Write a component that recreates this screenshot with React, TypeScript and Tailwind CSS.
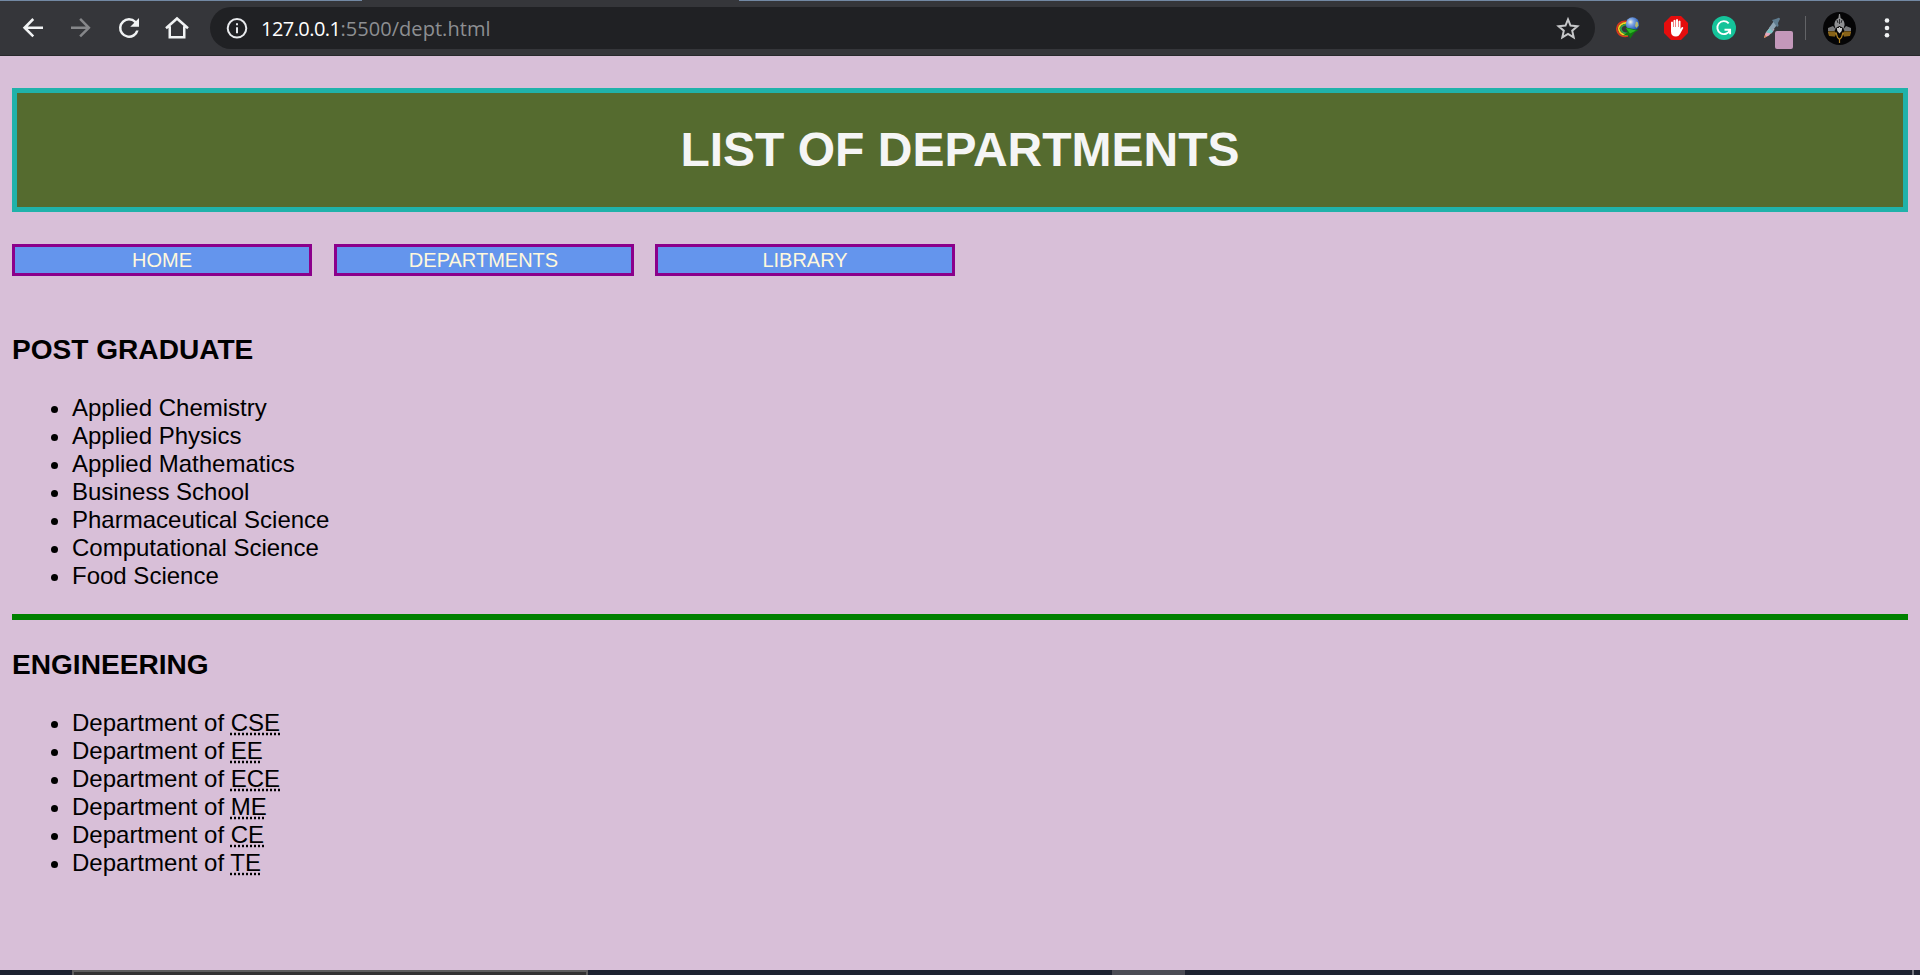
import React from "react";

const postGraduate = [
  "Applied Chemistry",
  "Applied Physics",
  "Applied Mathematics",
  "Business School",
  "Pharmaceutical Science",
  "Computational Science",
  "Food Science",
];
const engineering = ["CSE", "EE", "ECE", "ME", "CE", "TE"];
const nav = ["HOME", "DEPARTMENTS", "LIBRARY"];

function Toolbar() {
  return (
    <header className="flex h-14 flex-col border-b border-[#28292c] bg-[#35363a]">
      <div className="flex h-px justify-between">
        <div className="w-[362px] bg-[#7288a3]" />
        <div className="w-[1181px] bg-[#7288a3]" />
      </div>
      <div className="flex h-[54px] items-center">
        <svg className="ml-[18px] h-[30px] w-[30px]" viewBox="0 0 24 24" fill="#f1f3f4">
          <path d="M20 10.700H7.830l5.090-5.090L11.500 4l-7.700 7.700 7.700 7.700 1.410-1.410L7.830 12.700H20v-2z" />
        </svg>
        <svg className="ml-[18px] h-[30px] w-[30px]" viewBox="0 0 24 24" fill="#86878a">
          <path d="M12 4l-1.410 1.410L15.870 10.700H4v2h11.870l-5.280 5.290L12 19.400l7.700-7.700z" />
        </svg>
        <svg className="ml-[18px] h-[30px] w-[30px]" viewBox="0 0 24 24" fill="#f1f3f4">
          <path d="M17.650 6.350A7.960 7.960 0 0 0 12 4a8 8 0 1 0 7.730 10h-2.080A6 6 0 1 1 12 6c1.660 0 3.140.69 4.220 1.780L13 11h7V4l-2.350 2.350z" />
        </svg>
        <svg className="ml-[18px] h-[30px] w-[30px]" viewBox="0 0 24 24" fill="none" stroke="#f1f3f4" strokeWidth="2">
          <path d="M3.200 12.200 12 4.400l8.800 7.800M6.200 10.500V19.400h11.600V10.500" />
        </svg>
        <div className="ml-[18px] flex h-[42px] w-[1385px] items-center rounded-full bg-[#202124]">
          <svg className="ml-[15px] h-6 w-6" viewBox="0 0 24 24" fill="none" stroke="#e8eaed" strokeWidth="2">
            <circle cx="12" cy="12.300" r="9.300" />
            <path d="M12 11.300v6M12 7.300v2" />
          </svg>
          <div className="ml-[12px] flex-1 whitespace-nowrap pt-[2px] font-['Open_Sans',sans-serif] text-[20px] leading-[42px] text-[#8d8f92]">
            <span className="tracking-[-0.55px] text-white">127.0.0.1</span>
            <span className="tracking-[0.05px]">:5500/dept.html</span>
          </div>
          <svg className="mr-[15px] h-6 w-6" viewBox="0 0 24 24" fill="none" stroke="#c6c7c9" strokeWidth="2">
            <path d="M12 3.400l2.500 6.200 6.900.6-5.200 4.500 1.500 6.700L12 17.900l-5.700 3.500 1.500-6.700-5.200-4.500 6.900-.6z" />
          </svg>
        </div>
        <svg className="ml-[21px] h-6 w-6" viewBox="0 0 24 24">
          <defs>
            <radialGradient id="globe" cx=".35" cy=".35" r=".65">
              <stop offset="0" stopColor="#f6f6dc" />
              <stop offset=".35" stopColor="#7fa6e4" />
              <stop offset="1" stopColor="#1f55b4" />
            </radialGradient>
          </defs>
          <path d="M11 5.500C5 4.500 0 9 1 14s6 7.500 11 6" fill="none" stroke="#d9381c" strokeWidth="1.700" />
          <path d="M11 7C6 6.500 2 10 3 14s5 5.500 9 4.500" fill="none" stroke="#f4d321" strokeWidth="1.700" />
          <path d="M11 8.700C7 8.500 4 11 5 13.700s4 4 7 3.300" fill="none" stroke="#2fa648" strokeWidth="1.700" />
          <circle cx="16.500" cy="8" r="6.700" fill="url(#globe)" />
          <path d="M20 5.500l2 1 .5 3-2 2.500-1.500-2z" fill="#d8d052" opacity=".75" />
          <path d="M9.500 11.500l13 2.500-4.200 2.800-4.300 6-1-3.600-6 .3 4.500-3.300z" fill="#107a10" />
          <path d="M10 12l10 2.500-6 3z" fill="#2cb824" />
        </svg>
        <svg className="ml-[24px] h-6 w-6" viewBox="0 0 24 24">
          <path d="M7 0h10l7 7v10l-7 7H7l-7-7V7z" fill="#e50d0d" />
          <path d="M7 6.200q1-1.400 2 0V11h.5V4.500q1-1.400 2 0V11h.5V3.800q1-1.400 2 0V11h.5V5.200q1-1.400 2 0V13l1.200-1.700q1.300-.6 1.600.6L16 18q-1.300 2.600-4 2.600-5 0-5-5z" fill="#fff" />
        </svg>
        <svg className="ml-[24px] h-6 w-6" viewBox="0 0 24 24">
          <circle cx="12" cy="12" r="12" fill="#15c39a" />
          <path d="M16.700 7.300A6.500 6.500 0 1 0 17.900 14M12.500 13.700h5.600v4.600" fill="none" stroke="#fff" strokeWidth="1.900" />
        </svg>
        <svg className="ml-[24px] h-[42px] w-[36px]" viewBox="0 0 36 42">
          <path d="M4 31l1.500-5 5-6.500 4 3-5.500 6z" fill="#e3a7bd" />
          <path d="M4 31l1-3 2 1.500z" fill="#dd8a52" />
          <path d="M6 25.500l3.500-4.500 4 3-2 2.500z" fill="#79c3c4" />
          <path d="M9 21l5-7 3.500 3-5 7z" fill="#8ea5b4" />
          <path d="M12 13l2-.5 3-1q2.500-1.500 3 .5l-2 4 .5 3-1.500 1z" fill="#607d90" />
          <rect x="15" y="24" width="18" height="18" rx="2" fill="#c398ba" />
        </svg>
        <div className="ml-[9px] h-6 w-px bg-[#636467]" />
        <svg className="ml-[17px] h-[33px] w-[33px]" viewBox="0 0 33 33">
          <circle cx="16.500" cy="16.500" r="16.500" fill="#050506" />
          <path d="M16 2h1l.6 4q4 2 4 7l-1.200 4-1.500-3h-4.800l-1.500 3-1.200-4q0-5 4-7z" fill="#8f9092" />
          <path d="M14 8l1 3M16.500 7v5M19 8l-1 3" stroke="#202124" strokeWidth=".9" />
          <path d="M13.500 14l3 1 3-1-.8 5-2.200 2.500-2.200-2.500z" fill="#c9c9c9" />
          <path d="M14 15.500h2M17 15.500h2" stroke="#111" strokeWidth="1.200" />
          <path d="M5 16l5-2 2.500 3-1 2H5zM28 16l-5-2-2.500 3 1 2H28z" fill="#77787a" />
          <path d="M5 19.500h7l1 2-1 3-6-.5zM28 19.500h-7l-1 2 1 3 6-.5z" fill="#b28321" />
          <path d="M7 20v4M9 20v4M11 20v4M22 20v4M24 20v4M26 20v4" stroke="#3a2a08" strokeWidth=".7" />
          <path d="M13 20.500l1.500 5 2 2 2-2 1.500-5M16.500 27v4" fill="none" stroke="#b28321" strokeWidth="1.200" />
        </svg>
        <svg className="ml-[19px] h-6 w-6" viewBox="0 0 24 24" fill="#f1f3f4">
          <circle cx="12" cy="4.500" r="2.300" />
          <circle cx="12" cy="12" r="2.300" />
          <circle cx="12" cy="19.300" r="2.300" />
        </svg>
      </div>
    </header>
  );
}

export default function App() {
  return (
    <div className="flex h-[975px] w-[1920px] flex-col overflow-hidden bg-[#d8bfd8] font-['Liberation_Sans',Arial,sans-serif] text-black">
      <Toolbar />
      <main className="flex-1 px-3 pt-8">
        <h1 className="h-[124px] border-[5px] border-[#20b2aa] bg-[#556b2f] text-center text-[48px] font-bold leading-[114px] text-[#f5f5f5]">
          LIST OF DEPARTMENTS
        </h1>
        <nav className="mt-8 flex gap-[21.500px]">
          {nav.map((n) => (
            <a key={n} className="h-8 w-[300px] border-[3px] border-[#8b008b] bg-[#6495ed] text-center text-[20px] leading-[26px] text-[#fff8dc]">
              {n}
            </a>
          ))}
        </nav>
        <h3 className="mt-[58px] text-[28.080px] font-bold leading-8">POST GRADUATE</h3>
        <ul className="mt-7 list-disc pl-[60px] text-[24px] leading-7">
          {postGraduate.map((d) => (
            <li key={d}>{d}</li>
          ))}
        </ul>
        <hr className="mt-6 h-1.5 border-0 bg-[#008000]" />
        <h3 className="mt-[29px] text-[28.080px] font-bold leading-8">ENGINEERING</h3>
        <ul className="mt-7 list-disc pl-[60px] text-[24px] leading-7">
          {engineering.map((d) => (
            <li key={d}>
              Department of <abbr className="underline decoration-dotted">{d}</abbr>
            </li>
          ))}
        </ul>
      </main>
      <footer className="flex h-[5px] bg-[#1d2230]">
        <div className="ml-[72px] w-[516px] border-x-2 border-t-2 border-[#5e5e5e] bg-[#333333]" />
        <div className="ml-[524px] w-[73px] bg-[#4b4c55]" />
        <div className="ml-auto mr-[6px] w-[2px] bg-[#74777f]" />
      </footer>
    </div>
  );
}
